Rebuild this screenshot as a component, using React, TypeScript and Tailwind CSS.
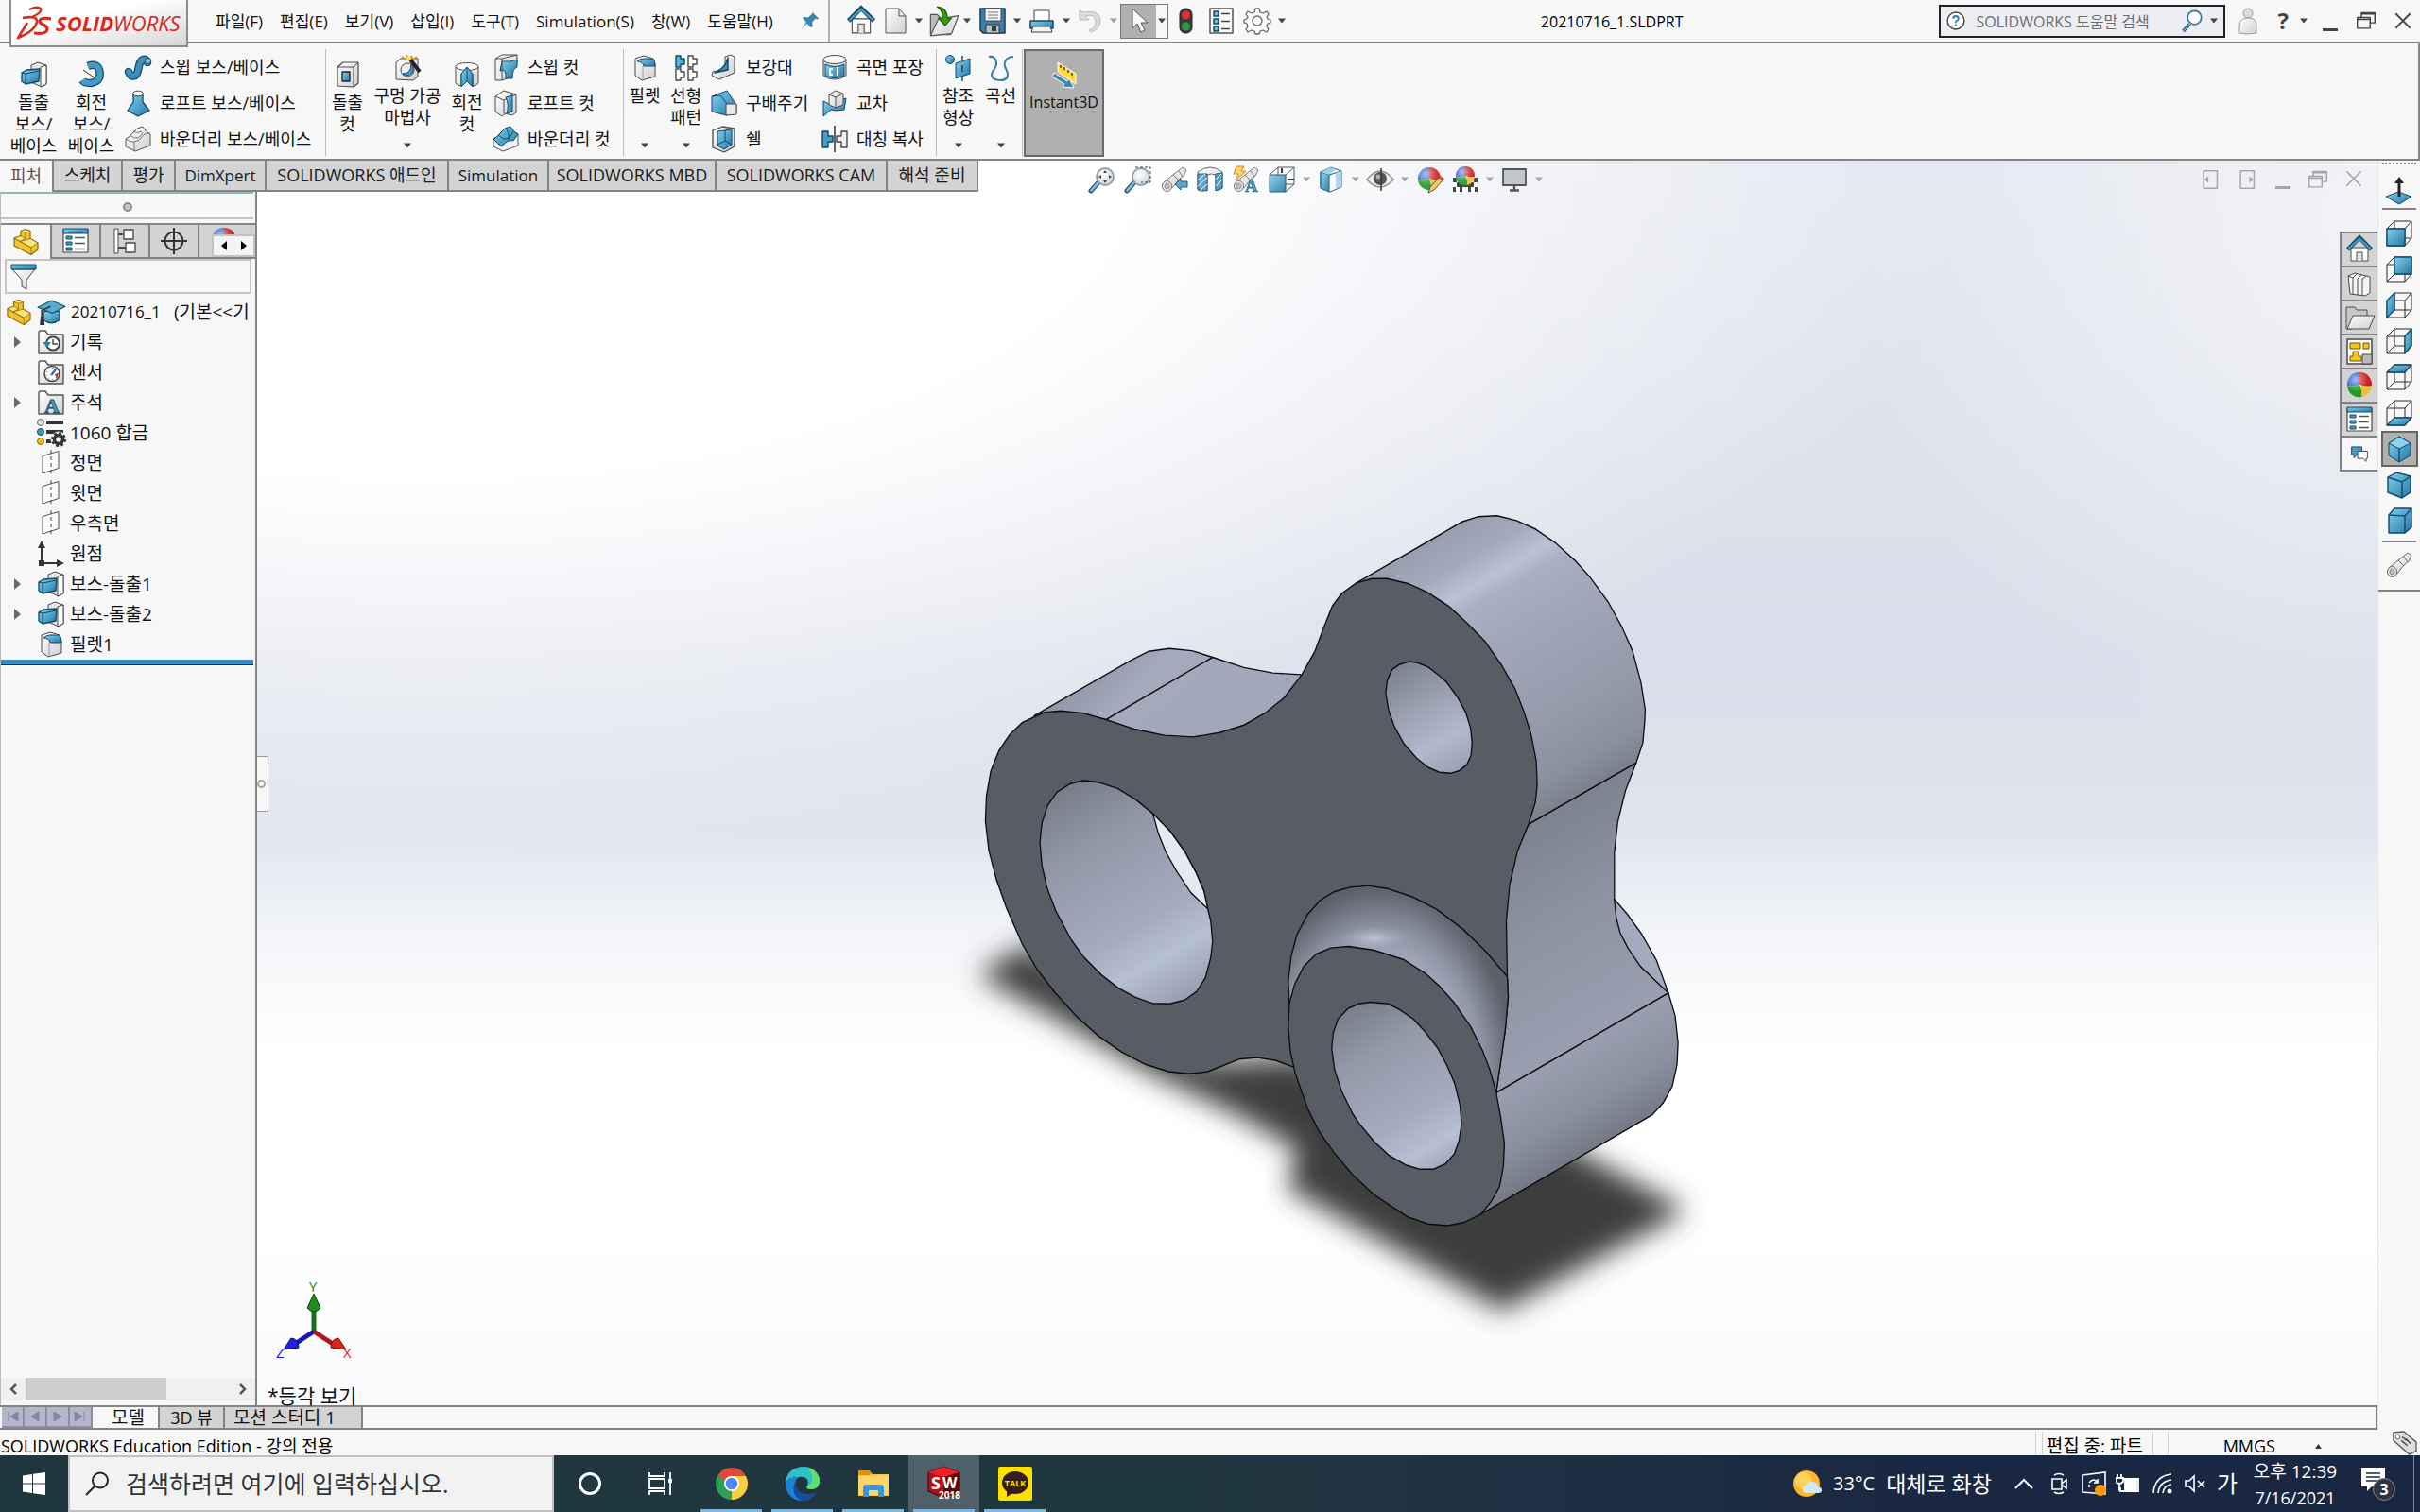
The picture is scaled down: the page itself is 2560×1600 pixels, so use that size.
import type { ReactNode } from 'react';

const B = '#0f4a68';
const G = '#4a4a4a';

function Svg({ children, className = 'size-7' }: { children: ReactNode; className?: string }) {
  return (
    <svg viewBox="0 0 28 28" className={`shrink-0 overflow-visible ${className}`} fill="none" strokeLinejoin="round" aria-hidden="true">
      {children}
    </svg>
  );
}

function Caret({ light = false }: { light?: boolean }) {
  return (
    <svg viewBox="0 0 8 6" className={light ? 'w-2 h-[6px] shrink-0 text-[#a0a0a0]' : 'w-2 h-[6px] shrink-0 text-[#444]'} aria-hidden="true">
      <path d="M0 0.5h8L4 5.5z" fill="currentColor" />
    </svg>
  );
}

function Defs() {
  return (
    <svg className="absolute size-0" aria-hidden="true">
      <defs>
        <linearGradient id="blue" x1="0" y1="0" x2="1" y2="1">
          <stop offset="0" stopColor="#86cfee" />
          <stop offset="0.5" stopColor="#52a5cd" />
          <stop offset="1" stopColor="#2d739b" />
        </linearGradient>
        <linearGradient id="gray" x1="0" y1="0" x2="1" y2="1">
          <stop offset="0" stopColor="#ffffff" />
          <stop offset="1" stopColor="#cfcfcf" />
        </linearGradient>
        <radialGradient id="glass" cx="0.4" cy="0.35" r="0.7">
          <stop offset="0" stopColor="#ffffff" />
          <stop offset="1" stopColor="#c5d2da" />
        </radialGradient>
        <radialGradient id="shine" cx="0.35" cy="0.3" r="0.5">
          <stop offset="0" stopColor="#ffffff" stopOpacity="0.6" />
          <stop offset="1" stopColor="#ffffff" stopOpacity="0" />
        </radialGradient>
      </defs>
    </svg>
  );
}

function Ball({ cx = 14, cy = 13, r = 12 }: { cx?: number; cy?: number; r?: number }) {
  return (
    <g transform={`translate(${cx} ${cy}) scale(${r})`}>
      <path d="M0 0V-1A1 1 0 0 0 -1 0.1Q-0.5 0.2 0 0z" fill="#2458cc" />
      <path d="M0 0V-1A1 1 0 0 1 1 0.1Q0.5 0.2 0 0z" fill="#cf1d1d" />
      <path d="M0 0Q-0.5 0.2 -1 0.1A1 1 0 0 0 0.2 1Q0.2 0.4 0 0z" fill="#1f9a24" />
      <path d="M0 0Q0.5 0.2 1 0.1A1 1 0 0 1 0.2 1Q0.2 0.4 0 0z" fill="#eac03a" />
      <circle r="1" fill="url(#shine)" />
    </g>
  );
}

const houseIcon = (
  <>
    <path d="M5 12h18v14H5z" fill="#fff" stroke={G} />
    <path d="M11 26v-9h6v9" stroke={G} fill="#e4e4e4" />
    <path d="M1.500 14 14 1.500 26.500 14" stroke={B} strokeWidth="4.500" strokeLinejoin="miter" />
    <path d="M2 13.500 14 2.500 26 13.500" stroke="#4a9cc5" strokeWidth="2" strokeLinejoin="miter" />
  </>
);
const partIcon = (
  <>
    <path d="M2 10l7-2.500V2.500l5-2 5 2v8l8 4.500v7l-7 5.500L2 18z" fill="#f4c42c" stroke="#8a6a10" strokeWidth="1.200" />
    <path d="M9 2.500l5-2 5 2-5 2zM2 10l7-2.500 5 3-6 3zM8 13.500l11-3 8 4.500-7 5z" fill="#fbe37c" stroke="#8a6a10" strokeWidth="0.800" />
    <path d="M14 4.500v6M20 20v7.500M2 10l18 10" stroke="#8a6a10" strokeWidth="0.800" />
  </>
);
const bossIcon = (
  <>
    <path d="M11 4l7-3 9 3v20l-5 3-11-5z" fill="#e6e6e6" stroke={G} />
    <path d="M21 6l6-2v20l-6 3z" fill="#fff" stroke={G} />
    <path d="M1 12l5-3 14-1-1 13-14 3-4-3z" fill="url(#blue)" stroke={B} strokeWidth="1.300" />
    <path d="M1 12l4 1 15-3M5 13v10" stroke={B} />
  </>
);
const filletIcon = (
  <>
    <path d="M4 4 13 1l10 3 2 6v13l-14 4-7-5z" fill="url(#gray)" stroke={G} />
    <path d="M6 7q3-3 7-3h9q3 1 3 8H13q-1-5-7-5z" fill="url(#blue)" stroke={B} />
    <path d="M12 12v15" stroke="#999" />
  </>
);
const listIcon = (
  <>
    <path d="M1 2h26v24H1z" fill="#fff" stroke={G} strokeWidth="1.200" />
    <path d="M1 1h26v5H1z" fill="url(#blue)" stroke={B} />
    <path d="M4 9h6v3H4zM4 15h6v3H4zM4 21h6v3H4z" fill="#4a9cc5" stroke={B} />
    <path d="M13 10.500h11M13 16.500h11M13 22.500h11" stroke="#555" strokeWidth="1.300" />
  </>
);
const scopeIcon = (
  <>
    <path d="M2 18 14 8l4-3 5-4 4 3-3 6-5 4-7 9z" fill="url(#gray)" stroke="#6a6a6a" />
    <path d="M13 9l6 6M19 5l4 6" stroke="#6a6a6a" />
    <ellipse cx="6.500" cy="21" rx="5" ry="5.500" fill="#e8e8e8" stroke="#6a6a6a" />
    <ellipse cx="6.500" cy="21" rx="2.500" ry="3" fill="#bbb" stroke="#888" />
  </>
);
const planeIcon = (
  <>
    <path d="M5 6.500 22 1.500v18L5 25z" fill="#fafafa" stroke="#555" />
    <path d="M14 0v28" stroke="#444" strokeDasharray="4 3" />
  </>
);
const folder = <path d="M1 4q0-2 2-2h5l3 4h16v20H1z" fill="url(#gray)" stroke="#555" strokeWidth="1.400" />;

function Magnifier() {
  return (
    <>
      <path d="M10 17 2 26" stroke={B} strokeWidth="5" strokeLinecap="round" />
      <path d="M9.500 17.500 2.500 25.500" stroke="#7cbcdc" strokeWidth="2.500" strokeLinecap="round" />
      <circle cx="17" cy="11" r="9" fill="url(#glass)" stroke="#8a9298" strokeWidth="1.800" />
    </>
  );
}

const menus = ['파일(F)', '편집(E)', '보기(V)', '삽입(I)', '도구(T)', 'Simulation(S)', '창(W)', '도움말(H)'];

function TitleBar() {
  return (
    <header className="relative z-10 flex h-[46px] shrink-0 items-center border-b-2 border-[#848484] bg-[#f7f7f7]">
      <div className="ml-[10px] flex h-[50px] w-[189px] shrink-0 items-center gap-[5px] self-start border-2 border-t-0 border-[#8c8c8c] bg-linear-to-br from-white from-40% to-[#d6d6d6] pl-[6px]">
        <svg viewBox="0 0 36 36" className="size-9 shrink-0 text-[#da291c]" fill="none" stroke="currentColor" aria-hidden="true">
          <path d="M13 4Q22 0 25 3q2 4-9 9" strokeWidth="2.400" />
          <path d="M6 13q16-3 15 4Q19 27 1 34l10-16" strokeWidth="2.600" />
          <path d="M36 14q-11-2-12 2c-1 4 9 4 8 9-1 5-7 5-14 4" strokeWidth="3.200" />
        </svg>
        <span className="whitespace-nowrap text-[22px] italic text-[#da291c]">
          <b>SOLID</b>WORKS
        </span>
      </div>
      <nav className="ml-[29px] flex gap-[18px] pt-[2px] text-[17px]">
        {menus.map((m) => (
          <button key={m} className="whitespace-nowrap">
            {m}
          </button>
        ))}
      </nav>
      <button aria-label="고정" className="ml-[29px] shrink-0">
        <Svg className="size-5">
          <path d="M17 1l10 10-3 1-2-1-5 5 1 6-3 2-6-6-8 9 7-11-5-6 2-2 6 1 6-5z" fill="#3a86ad" />
        </Svg>
      </button>
      <div className="ml-[9px] h-full w-[2px] bg-[#b0b0b0]" />
      <div className="ml-[18px] flex shrink-0 items-center">
        <button aria-label="홈"><Svg className="size-[30px]">{houseIcon}</Svg></button>
        <button aria-label="새 문서" className="ml-2 flex items-center gap-[6px]">
          <Svg><path d="M3 1h14l7 8v18H3z" fill="url(#gray)" stroke="#555" /><path d="M17 1v8h7" stroke="#555" /></Svg>
          <Caret />
        </button>
        <button aria-label="열기" className="ml-[6px] flex items-center gap-1">
          <Svg className="size-[33px]">
            <path d="M2 8h6l3 3h9v15H2z" fill="#bbb" stroke="#555" />
            <path d="M9 12l18-3-6 16-19 2z" fill="url(#gray)" stroke="#555" />
            <path d="M8 1q9 1 9 10h4l-6 7-6-7h4Q13 4 8 1z" fill="#3c9a12" stroke="#1d6204" />
          </Svg>
          <Caret />
        </button>
        <button aria-label="저장" className="ml-[9px] flex items-center gap-2">
          <Svg>
            <path d="M1 1h26v26H4l-3-3z" fill="#3a7fa5" stroke="#173d52" strokeWidth="1.500" />
            <path d="M6 1h17v13H6z" fill="#f5f5f5" stroke="#444" />
            <path d="M9 5h11M9 8h11M9 11h11" stroke="#777" />
            <path d="M7 18h14v9H7z" fill="#b9c4ca" stroke="#333" /><path d="M13 20h5v5h-5z" fill="#333" />
          </Svg>
          <Caret />
        </button>
        <button aria-label="인쇄" className="ml-2 flex items-center gap-2">
          <Svg>
            <path d="M6 3h16v12H6z" fill="#fff" stroke="#444" />
            <path d="M2 14h24v8H2z" fill="url(#blue)" stroke={B} strokeWidth="1.500" />
            <path d="M5 20h18l2 6H3z" fill="#f2f2f2" stroke="#444" />
          </Svg>
          <Caret />
        </button>
        <button aria-label="실행 취소" className="ml-[6px] flex items-center gap-2">
          <Svg><path d="M4 3v10h10l-4-4q10-3 11 5 1 7-7 10l2 2q10-3 10-13Q25 2 9 5z" fill="#ddd" stroke="#b8b8b8" /></Svg>
          <Caret light />
        </button>
        <button aria-label="선택" className="ml-[3px] flex h-[37px] items-center border border-[#777]">
          <span className="flex h-full w-[37px] items-center justify-center bg-[#b0b0b0]">
            <Svg><path d="M8 1v21l5-5 4 9 4-2-4-8h7z" fill="#fafafa" stroke="#555" /></Svg>
          </span>
          <span className="px-[2px]"><Caret /></span>
        </button>
        <button aria-label="재생성" className="ml-1">
          <Svg>
            <rect x="8" y="1" width="13" height="26" rx="6" fill="#3a3a3a" stroke="#222" />
            <circle cx="14.500" cy="8" r="4.500" fill="#d33" /><circle cx="14.500" cy="20" r="4.500" fill="#2e9a3e" />
          </Svg>
        </button>
        <button aria-label="파일 속성" className="ml-[10px]">
          <Svg>
            <path d="M2 1h24v26H2z" fill="#fafafa" stroke="#555" strokeWidth="1.500" />
            <path d="M6 4h5v5H6zM6 12h5v5H6zM6 20h5v5H6z" fill="#6fb6d8" stroke={B} strokeWidth="1.500" />
            <path d="M14 6.500h9M14 14.500h9M14 22.500h9" stroke="#444" strokeWidth="1.500" />
          </Svg>
        </button>
        <button aria-label="옵션" className="ml-[10px] flex items-center gap-2">
          <Svg>
            <path d="M12 1h4l1 4 3 1 4-2 2 3-2 3 1 2 3 1v3l-3 1-1 3 2 3-2 3-4-2-3 1-1 3h-4l-1-3-3-1-4 2-2-3 2-3-1-3-3-1v-3l3-1 1-2-2-3 2-3 4 2 3-1z" fill="#fafafa" stroke="#666" strokeWidth="1.300" />
            <circle cx="14" cy="14" r="5" stroke="#666" strokeWidth="1.300" />
          </Svg>
          <Caret />
        </button>
      </div>
      <h1 className="flex-1 pt-[2px] text-center text-[16px] text-black">20210716_1.SLDPRT</h1>
      <label className="flex h-[35px] w-[303px] shrink-0 items-center gap-2 border-2 border-[#222] bg-[#eceef3] px-[6px]">
        <Svg className="size-[20px]">
          <circle cx="14" cy="14" r="12.500" fill="#fff" stroke="#444" strokeWidth="2" />
          <path d="M10 11q0-4 4-4t4 4q0 2-4 4v2M14 19v3" stroke="#2b7fa8" strokeWidth="2.500" />
        </Svg>
        <input aria-label="도움말 검색" placeholder="SOLIDWORKS 도움말 검색" className="min-w-0 flex-1 bg-transparent pl-1 pt-[2px] text-[16px] outline-none placeholder:text-[#6c6c6c]" />
        <Svg className="size-6">
          <path d="M12 18 4 27" stroke={B} strokeWidth="4" /><path d="M12 18 4 27" stroke="#9ccbe2" strokeWidth="1.500" />
          <circle cx="18" cy="10" r="8.500" fill="#fff" stroke="#3f7698" strokeWidth="2" />
        </Svg>
        <Caret />
      </label>
      <div className="flex shrink-0 items-center pl-[10px] pr-[9px] text-[#444]">
        <button aria-label="로그인">
          <Svg className="h-[30px] w-[28px]">
            <circle cx="14" cy="6" r="5" fill="#ddd" stroke="#999" /><path d="M5 27V19q0-8 9-8t9 8v8q-9 2-18 0z" fill="url(#gray)" stroke="#999" />
          </Svg>
        </button>
        <button className="ml-[18px] flex items-center gap-3 text-[24px] font-bold leading-none">? <Caret /></button>
        <button aria-label="최소화" className="ml-4 pt-[18px]"><span className="block h-[3px] w-4 bg-[#444]" /></button>
        <button aria-label="이전 크기로" className="ml-5"><Svg className="size-5"><path d="M7 8V2h20v15h-6M1 9h19v16H1zM1 12h19M7 4h20" stroke="currentColor" strokeWidth="2" /></Svg></button>
        <button aria-label="닫기" className="ml-5"><Svg className="size-[18px]"><path d="M2 2l24 24M26 2 2 26" stroke="currentColor" strokeWidth="3" /></Svg></button>
      </div>
    </header>
  );
}

function Big({ icon, lines, width, menu = false }: { icon: ReactNode; lines: string[]; width: string; menu?: boolean }) {
  return (
    <button className={`flex h-full shrink-0 flex-col items-center leading-[23px] ${menu ? 'pt-3' : 'pt-[19px]'} ${width}`}>
      <Svg>{icon}</Svg>
      <span className="mt-1 flex flex-col whitespace-nowrap">
        {lines.map((l) => (
          <span key={l}>{l}</span>
        ))}
      </span>
      {menu && <span className="mt-auto flex pb-[11px]"><Caret /></span>}
    </button>
  );
}

function SmallColumn({ items, width }: { items: [string, ReactNode][]; width: string }) {
  return (
    <div className={`shrink-0 pl-[5px] pt-[6px] ${width}`}>
      {items.map(([label, icon]) => (
        <button key={label} className="flex h-[38px] items-center gap-[9px] whitespace-nowrap">
          <Svg>{icon}</Svg>
          {label}
        </button>
      ))}
    </div>
  );
}

function Divider() {
  return <div className="mt-[6px] h-[113px] w-px shrink-0 bg-[#bdbdbd]" />;
}

const icons = {
  revolve: (
    <>
      <path d="M10 5q11-4 12.500 6T13 23q-7 0-9-3" stroke={B} strokeWidth="8.500" />
      <path d="M10 5q11-4 12.500 6T13 23q-7 0-9-3" stroke="#459bc4" strokeWidth="6" />
      <path d="M5 9l13 9" stroke="#333" />
    </>
  ),
  sweep: (
    <>
      <path d="M4 19q2 6 7 4c5-3 2-14 8-17q4-1 5 3" stroke={B} strokeWidth="8.500" strokeLinecap="round" />
      <path d="M4 19q2 6 7 4c5-3 2-14 8-17q4-1 5 3" stroke="#3f8fb8" strokeWidth="6" strokeLinecap="round" />
      <circle cx="24.500" cy="7.500" r="3" fill="#8cc9e6" stroke={B} />
    </>
  ),
  loft: (
    <>
      <path d="M9 4v9L3 22l11 6 12-6-7-9V4z" fill="url(#blue)" stroke={B} strokeWidth="1.300" />
      <ellipse cx="14" cy="4" rx="5.500" ry="2.800" fill="#fff" stroke={G} />
    </>
  ),
  boundary: (
    <>
      <path d="M1 14q5-2 8-7t10-6q3 6 8 8v12L11 27 1 22z" fill="url(#gray)" stroke="#555" />
      <path d="M1 14q5 4 9 3 6-1 8-5t9-4M5 10q5 4 9 3 4-3 5-6M9 6q4 3 9 0M10 17v10" stroke="#777" />
    </>
  ),
  boundaryCut: (
    <>
      <path d="M1 14q5-2 8-7t10-6q3 6 8 8v12L11 27 1 22z" fill="#f2f2f2" stroke="#555" />
      <path d="M1 14q5-2 8-7t10-6q3 6 8 8l-5 7q-6-2-12 6-4-2-9-8z" fill="url(#blue)" stroke={B} />
      <path d="M6 10q5 5 9 4t7-8M14 3q4 3 3 12" stroke={B} />
    </>
  ),
  cut: (
    <>
      <path d="M3 6 9 1h16v22l-5 4L3 26z" fill="url(#gray)" stroke={G} strokeWidth="1.200" />
      <path d="M3 6h17v21" stroke={G} /><path d="M20 6l5-5" stroke={G} />
      <path d="M8 11h8v10H8z" fill="url(#blue)" stroke="#222" strokeWidth="1.300" />
    </>
  ),
  wizard: (
    <>
      <path d="M2 8 7 4h18v19l-5 4L2 26z" fill="url(#gray)" stroke={G} />
      <circle cx="14" cy="16" r="7" fill="#eee" stroke={G} />
      <path d="M9 20q9 0 9-10 4 4 1 9-5 5-10 1z" fill="#4a9cc5" stroke={B} />
      <path d="M17 5 27 18" stroke="#222" strokeWidth="4" />
      <path d="M8 2l3 2M13 0l1 3M19 1l-2 3M24 2l-4 3" stroke="#e8842a" strokeWidth="2" />
      <circle cx="15.500" cy="4" r="2.500" fill="#ffe04a" />
    </>
  ),
  revolveCut: (
    <>
      <path d="M2 6v17q3 3 6 3V13l6-6 6 6v13q4 0 6-3V6z" fill="url(#gray)" stroke={G} />
      <ellipse cx="14" cy="5.500" rx="12" ry="4" fill="#fff" stroke={G} />
      <path d="M8 27V13l6-7 6 7v14l-6-6z" fill="url(#blue)" stroke={B} />
      <path d="M14 6v15" stroke={B} />
    </>
  ),
  sweepCut: (
    <>
      <path d="M3 5 10 1h16v8q-7 3-8 16l-8 3H3z" fill="url(#gray)" stroke={G} />
      <path d="M10 8q9 1 16-2v8q-5 1-5 12h-7q1-11-6-8z" fill="url(#blue)" stroke={B} />
      <path d="M3 5h7v23M10 5l16-4" stroke={G} />
    </>
  ),
  loftCut: (
    <>
      <path d="M3 7 12 1l13 4v19l-4 3-8-2-3 3-7-5z" fill="url(#gray)" stroke={G} />
      <path d="M3 7l9 4 13-6M12 11v14" stroke={G} />
      <path d="M14 8q6-1 7-3v18l-6 2q3-9-1-17z" fill="url(#blue)" stroke={B} />
    </>
  ),
  pattern: (
    <>
      <path d="M3 1h5v3h4v6H8v3H3z" fill="#5fb0d6" stroke={B} strokeWidth="1.400" />
      <path d="M16 1h5v3h4v6h-4v3h-5zM3 15h5v3h4v6H8v3H3zM16 15h5v3h4v6h-4v3h-5z" fill="#fff" stroke={G} strokeWidth="1.400" />
    </>
  ),
  rib: (
    <>
      <path d="M15 3l6-2 4 2v17L9 27l-8-4 1-4 13-4z" fill="url(#gray)" stroke={G} />
      <path d="M18 4q-2 11-14 16l14-3z" fill="url(#blue)" stroke={B} strokeWidth="1.400" />
    </>
  ),
  draft: (
    <>
      <path d="M1 7 17 1l10 15v9l-11 2L1 23z" fill="url(#blue)" stroke={B} />
      <path d="M16 15h11v11l-11 1z" fill="#e8e8e8" stroke={G} />
      <path d="M1 7l9-1 7 9" stroke={B} />
    </>
  ),
  shell: (
    <>
      <path d="M2 5 12 1l13 2v19l-11 6-12-5z" fill="url(#gray)" stroke={G} strokeWidth="1.300" />
      <path d="M7 6l15-2v16l-8 5-7-4z" fill="url(#blue)" stroke={B} /><path d="M7 20l8-4 7 4M15 16V5" stroke={B} />
    </>
  ),
  wrap: (
    <>
      <path d="M2 6v17q5 4 12 4t12-4V6z" fill="#e0e0e0" stroke={G} />
      <path d="M4 11q10 5 20 0v12q-10 5-20 0z" fill="url(#blue)" stroke={B} />
      <path d="M12 16H9v6h3M17 14v9" stroke="#fff" strokeWidth="2" />
      <ellipse cx="14" cy="6" rx="12" ry="4.500" fill="#fafafa" stroke={G} />
    </>
  ),
  intersect: (
    <>
      <path d="M2 12l6 3 18-6-2 12-8 1-6-1-8 7z" fill="url(#blue)" stroke={B} />
      <path d="M8 5l7-4 8 3v12l-8 3-7-3z" fill="url(#gray)" stroke={G} /><path d="M8 5l7 3 8-4M15 8v11" stroke={G} />
    </>
  ),
  mirror: (
    <>
      <path d="M1 6h6v5h5v6H7v6H1z" fill="#4a9cc5" stroke={B} strokeWidth="1.400" />
      <path d="M27 6h-6v5h-5v6h5v6h6z" fill="#f0f0f0" stroke={G} strokeWidth="1.400" />
      <path d="M14 0v28" stroke="#222" strokeWidth="1.400" />
    </>
  ),
  reference: (
    <>
      <circle cx="5" cy="5" r="4.500" fill="url(#blue)" stroke={B} />
      <path d="M11 9l15-5v16l-15 5z" fill="url(#blue)" stroke={B} /><path d="M18 1v5M18 11v7M18 23v5" stroke="#333" strokeWidth="1.400" />
    </>
  ),
  curve: <path d="M1 2q7-1 8 6c1 6-6 10-5 14 1 6 16 7 17 0 1-5-5-9-3-14q2-6 9-6" stroke="#2f7ca6" strokeWidth="2" />,
  instant: (
    <>
      <path d="M7 1l19 12v11L7 11z" fill="#ffd83a" stroke="#fff" />
      <path d="M10 4v3M14 6v3M18 9v3M22 12v3" stroke="#444" strokeWidth="1.500" />
      <path d="M3 12l14 9 2-3 5 10-12-1 2-3L1 16z" fill="#3c86b0" stroke="#fff" />
    </>
  ),
};

function Ribbon() {
  return (
    <section className="flex h-[124px] shrink-0 border-b-2 border-r-2 border-[#848484] bg-[#f7f7f7] pl-[5px]">
      <Big icon={bossIcon} lines={['돌출', '보스/', '베이스']} width="w-[61px]" />
      <Big icon={icons.revolve} lines={['회전', '보스/', '베이스']} width="w-[61px]" />
      <SmallColumn width="w-[217px]" items={[['스윕 보스/베이스', icons.sweep], ['로프트 보스/베이스', icons.loft], ['바운더리 보스/베이스', icons.boundary]]} />
      <Divider />
      <Big icon={icons.cut} lines={['돌출', '컷']} width="w-[45px]" />
      <Big icon={icons.wizard} lines={['구멍 가공', '마법사']} width="w-[82px]" menu />
      <Big icon={icons.revolveCut} lines={['회전', '컷']} width="w-[44px]" />
      <SmallColumn width="w-[143px]" items={[['스윕 컷', icons.sweepCut], ['로프트 컷', icons.loftCut], ['바운더리 컷', icons.boundaryCut]]} />
      <Divider />
      <Big icon={filletIcon} lines={['필렛']} width="w-[44px]" menu />
      <Big icon={icons.pattern} lines={['선형', '패턴']} width="w-[43px]" menu />
      <SmallColumn width="w-[117px]" items={[['보강대', icons.rib], ['구배주기', icons.draft], ['쉘', icons.shell]]} />
      <SmallColumn width="w-[126px]" items={[['곡면 포장', icons.wrap], ['교차', icons.intersect], ['대칭 복사', icons.mirror]]} />
      <Divider />
      <Big icon={icons.reference} lines={['참조', '형상']} width="w-[45px]" menu />
      <Big icon={icons.curve} lines={['곡선']} width="w-[45px]" menu />
      <Divider />
      <button className="ml-px mt-[6px] flex h-[114px] w-[85px] shrink-0 flex-col items-center border-2 border-[#6a6a6a] bg-[#b0b0b0] pt-[11px] text-[16px] leading-[23px]">
        <Svg>{icons.instant}</Svg>
        <span className="mt-1">Instant3D</span>
      </button>
    </section>
  );
}

const tabs: [string, string][] = [
  ['스케치', 'w-[73px]'],
  ['평가', 'w-[56px]'],
  ['DimXpert', 'w-[96px] text-[17px]'],
  ['SOLIDWORKS 애드인', 'w-[193px]'],
  ['Simulation', 'w-[106px] text-[17px]'],
  ['SOLIDWORKS MBD', 'w-[177px]'],
  ['SOLIDWORKS CAM', 'w-[181px]'],
  ['해석 준비', 'w-[98px]'],
];

function ViewButton({ label, children, menu = false }: { label: string; children: ReactNode; menu?: boolean }) {
  return (
    <button aria-label={label} className={`flex items-center gap-[8px] opacity-90 ${menu ? '-mr-[2px]' : ''}`}>
      <Svg>{children}</Svg>
      {menu && <Caret light />}
    </button>
  );
}

function TabRow() {
  return (
    <div className="relative z-10 flex h-[33px] shrink-0">
      <div role="tablist" className="flex shrink-0 border-b-2 border-[#848484] text-[#1a1a1a]">
        <button role="tab" aria-selected="true" className="-mb-[2px] w-[55px] bg-[#f7f7f7] text-[#555]">피처</button>
        {tabs.map(([label, width]) => (
          <button key={label} role="tab" aria-selected="false" className={`whitespace-nowrap border-l-2 border-[#848484] bg-[#d3d3d3] last:border-r-2 ${width}`}>
            {label}
          </button>
        ))}
      </div>
      <div className="ml-[117px] flex shrink-0 items-start gap-[10px] pt-[6px]">
        <ViewButton label="전체 보기"><Magnifier /><path d="M17 4l2 3h-4zM17 18l2-3h-4zM10 11l3-2v4zM24 11l-3-2v4z" fill="#333" /></ViewButton>
        <ViewButton label="영역 확대"><Magnifier /><path d="M11 1h16v16H17" stroke="#333" strokeDasharray="3 2" /></ViewButton>
        <ViewButton label="이전 뷰">{scopeIcon}<path d="M15 19l6-6v3h7v6h-7v3z" fill="#4a9cc5" stroke={B} /></ViewButton>
        <ViewButton label="단면도">
          <path d="M1 6q13-10 26 0v17q-3 3-7 2V9q-5-2-9 0v16q-6 3-10 0z" fill="url(#gray)" stroke="#555" />
          <path d="M1 8h10v18L1 24zM20 8l7-1v16l-7 3z" fill="#4a9cc5" stroke={B} />
          <path d="M1 15l8-7M1 21l10-9M4 25l7-6M20 14l6-6M20 21l7-7" stroke="#fff" />
        </ViewButton>
        <ViewButton label="동적 주석 뷰">{scopeIcon}<path d="M4 0h8l-3 5h5L3 15l3-7H1z" fill="#ffd34a" stroke="#d0702a" /><text x="13" y="27" fontSize="19" fontWeight="700" fontFamily="Liberation Serif" fill="#3b8fb8" stroke={B} strokeWidth="0.600">A</text></ViewButton>
        <ViewButton label="뷰 방향" menu><path d="M1 9 10 1h17v18l-9 8M18 9l9-8M10 1v8M27 19h-9" stroke="#444" /><path d="M1 9h17v18H1z" fill="url(#blue)" stroke={B} /><path d="M14 2v5M27 14h-7" stroke="#222" strokeWidth="2" /></ViewButton>
        <ViewButton label="표시 유형" menu><path d="M3 6 14 1l11 4v17l-12 5L3 23z" fill="#fafafa" stroke={B} /><path d="M3 6l9 3v18l-9-4z" fill="url(#blue)" stroke={B} /><path d="M3 6 14 1l5 2-7 6z" fill="#8fd0ec" /><path d="M12 9l13-4" stroke={B} /><path d="M19 7l6-2v17l-6 2z" fill="#a8d4ea" /></ViewButton>
        <ViewButton label="숨기기/보이기" menu><path d="M0 14Q14-4 28 14 14 30 0 14z" fill="#eee" stroke="#888" strokeWidth="1.500" /><circle cx="14" cy="13" r="7" fill="#444" /><circle cx="12" cy="11" r="2.500" fill="#aaa" /><path d="M15 2v24" stroke="#222" strokeWidth="1.500" /></ViewButton>
        <ViewButton label="화면 편집"><Ball /><path d="M13 28l2-6 9-10 4 3-9 10z" fill="#f2c94a" stroke="#444" /><path d="M24 12l2-2 4 3-2 3z" fill="#c44" /></ViewButton>
        <ViewButton label="화면 적용" menu><path d="M1 12h26v15H1z" fill="#333" /><path d="M5 12h5v5H5zM18 12h5v5h-5zM1 17h4v5H1zM11 22h6v5h-6zM23 17h4v5h-4zM4 22h4v5H4zM20 22h4v5h-4z" fill="#fff" /><Ball cx={14} cy={10} r={10} /></ViewButton>
        <ViewButton label="뷰 설정" menu><path d="M2 3h24v17H2z" fill="#bfc3c6" stroke="#444" strokeWidth="1.800" /><path d="M14 20v5M9 25.500h10" stroke="#444" strokeWidth="2.500" /></ViewButton>
      </div>
      <div className="ml-auto flex items-start gap-[19px] pr-4 pt-[10px] text-[#a5a5a5]">
        <button aria-label="이전 창"><Svg className="size-5"><path d="M3 1h20v26H3z" stroke="currentColor" strokeWidth="2" /><path d="M10 9v10l-6-5z" fill="currentColor" /></Svg></button>
        <button aria-label="다음 창"><Svg className="size-5"><path d="M3 1h20v26H3z" stroke="currentColor" strokeWidth="2" /><path d="M16 9v10l6-5z" fill="currentColor" /></Svg></button>
        <button aria-label="문서 최소화" className="pt-[17px]"><span className="block h-[3px] w-4 bg-[#a5a5a5]" /></button>
        <button aria-label="문서 크기 복원"><Svg className="size-5"><path d="M7 8V2h20v15h-6M1 9h19v16H1zM1 12h19M7 4h20" stroke="currentColor" strokeWidth="2" /></Svg></button>
        <button aria-label="문서 닫기"><Svg className="size-[18px]"><path d="M2 2l24 24M26 2 2 26" stroke="currentColor" strokeWidth="2.500" /></Svg></button>
      </div>
    </div>
  );
}

const tree: { label: string; open?: boolean; icon: ReactNode }[] = [
  { label: '기록', open: true, icon: <>{folder}<circle cx="16" cy="15.500" r="7" fill="#fff" stroke="#444" strokeWidth="2" /><path d="M16 11v5h5" stroke="#444" strokeWidth="1.500" /><path d="M5 14h9l-4 6z" fill="#2f7ca6" /></> },
  { label: '센서', icon: <>{folder}<circle cx="15" cy="15.500" r="8" fill="#fff" stroke="#444" strokeWidth="1.500" /><path d="M14 17l5-6" stroke="#2f7ca6" strokeWidth="2.500" /><path d="M22 15l-4 1 2 5z" fill="#d22" /><circle cx="15" cy="15.500" r="6" stroke="#444" strokeDasharray="1 3" /></> },
  { label: '주석', open: true, icon: <>{folder}<text x="7" y="25" fontSize="22" fontWeight="700" fontFamily="Liberation Serif" fill="#4a9cc5" stroke={B} strokeWidth="0.800">A</text></> },
  { label: '1060 합금', icon: <><circle cx="3" cy="3" r="3.500" fill="#ddd" stroke="#666" /><circle cx="3" cy="13" r="3.500" fill="#3f93bd" stroke={B} /><circle cx="3" cy="23" r="3.500" fill="#f0be1e" stroke="#8a6a10" /><path d="M9 3h18M9 13h18M9 23h6" stroke="#333" strokeWidth="4" /><circle cx="22" cy="21" r="8" stroke="#f7f7f7" fill="#f7f7f7" /><circle cx="22" cy="21" r="4.500" stroke="#333" strokeWidth="3.500" /><circle cx="22" cy="21" r="7" stroke="#333" strokeWidth="2" strokeDasharray="3 2.500" /></> },
  { label: '정면', icon: planeIcon },
  { label: '윗면', icon: planeIcon },
  { label: '우측면', icon: planeIcon },
  { label: '원점', icon: <><path d="M4 24V6M4 24h18" stroke="#333" strokeWidth="2" /><path d="M4 0l4 8H0zM28 24l-8 4v-8zM1 21h6v6H1z" fill="#333" /></> },
  { label: '보스-돌출1', open: true, icon: bossIcon },
  { label: '보스-돌출2', open: true, icon: bossIcon },
  { label: '필렛1', icon: filletIcon },
];

function FeaturePanel() {
  return (
    <aside className="flex w-[272px] shrink-0 flex-col border-l border-r-2 border-l-[#bbb] border-r-[#848484] bg-[#f7f7f7]">
      <div className="mr-[2px] flex h-[29px] shrink-0 items-center justify-center border-b-2 border-t-2 border-b-[#c4c4c4] border-t-[#8fb5b0]">
        <span className="mt-[2px] size-[10px] rounded-full border-2 border-[#8d8d8d] bg-[#c8c8c8]" />
      </div>
      <div className="mt-1 flex h-[38px] shrink-0 border-t-2 border-[#848484]">
        <button aria-label="트리" className="flex w-[52px] items-center justify-center"><Svg>{partIcon}</Svg></button>
        <button aria-label="속성" className="flex w-[52px] items-center justify-center border-b-2 border-l-2 border-[#848484] bg-[#d3d3d3]"><Svg>{listIcon}</Svg></button>
        <button aria-label="설정" className="flex w-[52px] items-center justify-center border-b-2 border-l-2 border-[#848484] bg-[#d3d3d3]">
          <Svg><path d="M3 1h4v26H3z" fill="#fff" stroke={G} /><path d="M7 7h5M7 21h8" stroke={G} strokeWidth="2" /><path d="M13 2h10v10H13zM15 16h10v10H15z" fill="#fff" stroke={G} strokeWidth="1.400" /></Svg>
        </button>
        <button aria-label="치수" className="flex w-[52px] items-center justify-center border-b-2 border-l-2 border-[#848484] bg-[#d3d3d3]">
          <Svg><circle cx="14" cy="14" r="9.500" stroke="#333" strokeWidth="2" /><path d="M14 0v28M0 14h28" stroke="#333" strokeWidth="2" /></Svg>
        </button>
        <button aria-label="표시" className="relative flex flex-1 overflow-hidden border-b-2 border-l-2 border-[#848484] bg-[#d3d3d3] pl-3 pt-[2px]">
          <Svg><Ball cy={14} cx={14} r={13} /></Svg>
          <span className="absolute bottom-0 right-0 flex h-6 w-[46px] items-center justify-around border-2 border-[#c2c2c2] bg-[#f4f4f4] text-black">
            <svg viewBox="0 0 6 10" className="h-[10px] w-[6px]"><path d="M6 0v10L0 5z" /></svg>
            <svg viewBox="0 0 6 10" className="h-[10px] w-[6px]"><path d="M0 0v10l6-5z" /></svg>
          </span>
        </button>
      </div>
      <label className="ml-1 mr-[4px] flex h-[37px] shrink-0 items-center border-2 border-[#c4c4c4] pl-1">
        <Svg>
          <path d="M2 6h24L17 17v10l-5-3v-7z" fill="url(#gray)" stroke={G} /><path d="M1 1h26v5H1z" fill="url(#blue)" stroke={B} />
        </Svg>
        <input aria-label="필터" className="min-w-0 flex-1 bg-transparent outline-none" />
      </label>
      <div className="mr-[2px] pt-[3px] text-[19px]">
        <div className="flex h-8 items-center whitespace-nowrap pl-[5px]">
          <Svg className="size-[27px]">{partIcon}</Svg>
          <Svg className="ml-[7px] size-[29px]">
            <path d="M6 13v9q8 6 16 0v-9z" fill="url(#blue)" stroke={B} /><path d="M0 9 14 2l14 6-13 7z" fill="#5aabd0" stroke={B} />
            <path d="M13 8 4 12v8" stroke="#333" strokeWidth="1.500" /><path d="M3 18h3l1 9H2z" fill="#333" />
          </Svg>
          <span className="ml-[6px] text-[17px]">20210716_1</span>
          <span className="ml-[14px]">(기본&lt;&lt;기</span>
        </div>
        <ul>
          {tree.map((n) => (
            <li key={n.label} className="flex h-8 items-center pl-[14px]">
              <span className="w-[25px]">{n.open && <svg viewBox="0 0 7 12" className="h-3 w-[7px]" fill="#6a6a6a"><path d="M0 0v12l7-6z" /></svg>}</span>
              <Svg>{n.icon}</Svg>
              <span className="ml-[6px]">{n.label}</span>
            </li>
          ))}
        </ul>
        <div className="h-[6px] border-b border-[#1a1aa0] bg-[#338fc6]" />
      </div>
      <div className="mb-[5px] mt-auto flex h-6 items-center bg-[#f0f0f0] text-[#555]">
        <button aria-label="왼쪽으로" className="flex w-[26px] justify-center"><svg viewBox="0 0 8 12" className="h-3 w-2" fill="none" stroke="currentColor" strokeWidth="2.500"><path d="M7 1 2 6l5 5" /></svg></button>
        <div className="h-full w-[149px] bg-[#cdcdcd]" />
        <button aria-label="오른쪽으로" className="ml-auto flex w-[26px] justify-center"><svg viewBox="0 0 8 12" className="h-3 w-2" fill="none" stroke="currentColor" strokeWidth="2.500"><path d="M1 1l5 5-5 5" /></svg></button>
      </div>
    </aside>
  );
}

const face =
  'M200,403 L165,406 L121,424 L95,446 L72,476 L55,514 L46,560 L44,606 L51,660 L66,712 L87,765 L120,832 L150,878 L188,922 L233,966 L278,1002 L327,1032 L377,1055 L424,1068 L467,1072 L505,1068 L570,1045 L608,1042 L645,1047 L684,1060 L900,1200 L1103,1107 L1122,990 L1128,930 L1126,893 L1124,790 L1131,723 L1147,662 L1170,612 L1184,572 L1188,540 L1186,495 L1175,445 L1160,403 L1142,362 L1113,317 L1080,275 L1045,243 L1005,210 L960,184 L920,168 L877,159 L845,159 L813,167 L783,186 L763,210 L745,250 L727,293 L700,336 L663,379 L625,406 L580,429 L530,443 L475,451 L415,448 L355,437 L294,419 L247,407 Z';
const ring =
  'M797,837 L760,840 L730,851 L704,874 L685,907 L674,943 L672,988 L676,1030 L686,1070 L712,1136 L735,1177 L765,1215 L805,1258 L850,1295 L880,1313 L920,1336 L962,1349 L1002,1352 L1037,1346 L1071,1331 L1093,1307 L1110,1280 L1118,1242 L1120,1200 L1112,1150 L1103,1107 L1090,1065 L1075,1030 L1050,985 L1015,940 L985,910 L955,886 L910,861 L850,844 Z';
const ringHole =
  'M842,940 L818,943 L795,952 L775,971 L765,997 L762,1025 L768,1065 L783,1105 L805,1145 L820,1165 L850,1197 L880,1222 L915,1240 L945,1248 L972,1248 L998,1238 L1016,1220 L1026,1195 L1031,1165 L1028,1130 L1017,1090 L1000,1055 L982,1025 L955,994 L930,970 L905,955 L880,943 Z';
const bigHole =
  'M247,531 L218,538 L192,553 L173,577 L161,610 L157,645 L161,687 L172,730 L190,772 L222,825 L248,857 L285,890 L320,914 L355,931 L390,942 L425,943 L457,936 L482,920 L500,895 L511,858 L515,828 L511,790 L505,768 L497,735 L480,700 L457,662 L427,625 L391,592 L355,566 L318,546 L280,535 Z';
const smallHole =
  'M922,312 L903,317 L887,327 L877,347 L874,370 L880,402 L892,432 L912,464 L938,490 L962,507 L985,516 L1008,518 L1027,513 L1042,502 L1051,485 L1053,462 L1050,435 L1040,406 L1023,378 L1000,350 L985,338 L962,322 L940,314 Z';

function Model() {
  return (
    <svg viewBox="0 0 1568 1568" preserveAspectRatio="none" className="absolute left-[748px] top-[318px] h-[900px] w-[800px] overflow-visible" role="img" aria-label="20210716_1">
      <defs>
        <filter id="soft" x="-20%" y="-20%" width="140%" height="140%"><feGaussianBlur stdDeviation="26" /></filter>
        <linearGradient id="lobe" gradientUnits="userSpaceOnUse" x1="813" y1="167" x2="1068" y2="664">
          <stop offset="0" stopColor="#989eae" /><stop offset="0.120" stopColor="#a3aabc" /><stop offset="0.210" stopColor="#b9c2d5" /><stop offset="0.270" stopColor="#a9afc4" />
          <stop offset="0.420" stopColor="#a1a7b8" /><stop offset="0.720" stopColor="#959bab" /><stop offset="0.900" stopColor="#8a909e" /><stop offset="1" stopColor="#7b808c" />
        </linearGradient>
        <linearGradient id="waist" gradientUnits="userSpaceOnUse" x1="1170" y1="580" x2="1370" y2="969">
          <stop offset="0" stopColor="#7b808d" /><stop offset="0.500" stopColor="#8d93a2" /><stop offset="1" stopColor="#999fb0" />
        </linearGradient>
        <linearGradient id="base" gradientUnits="userSpaceOnUse" x1="1103" y1="1107" x2="1200" y2="1296">
          <stop offset="0" stopColor="#999fb0" /><stop offset="0.500" stopColor="#8a909e" /><stop offset="0.850" stopColor="#757a86" /><stop offset="1" stopColor="#666a74" />
        </linearGradient>
        <linearGradient id="left" gradientUnits="userSpaceOnUse" x1="150" y1="410" x2="280" y2="560">
          <stop offset="0" stopColor="#8f95a5" /><stop offset="0.500" stopColor="#a5abbd" /><stop offset="1" stopColor="#a2a8ba" />
        </linearGradient>
        <linearGradient id="boreA" gradientUnits="userSpaceOnUse" x1="247" y1="531" x2="451" y2="928">
          <stop offset="0" stopColor="#797e8a" /><stop offset="0.250" stopColor="#9197a6" /><stop offset="0.650" stopColor="#a5abbe" /><stop offset="0.820" stopColor="#b6c0d3" /><stop offset="1" stopColor="#9aa1b2" />
        </linearGradient>
        <linearGradient id="boreB" gradientUnits="userSpaceOnUse" x1="922" y1="312" x2="1025" y2="512">
          <stop offset="0" stopColor="#7d828f" /><stop offset="0.350" stopColor="#999fae" /><stop offset="0.720" stopColor="#b2b9cd" /><stop offset="1" stopColor="#9aa1b2" />
        </linearGradient>
        <linearGradient id="boreC" gradientUnits="userSpaceOnUse" x1="842" y1="940" x2="1000" y2="1248">
          <stop offset="0" stopColor="#7b808c" /><stop offset="0.250" stopColor="#9399a8" /><stop offset="0.650" stopColor="#a5abbe" /><stop offset="0.850" stopColor="#b6c0d3" /><stop offset="1" stopColor="#9da4b5" />
        </linearGradient>
        <radialGradient id="fillet" gradientUnits="userSpaceOnUse" cx="860" cy="1080" r="400" gradientTransform="matrix(0.800 0 0 1 172 0)">
          <stop offset="0.550" stopColor="#a4aabd" /><stop offset="0.680" stopColor="#8f95a4" /><stop offset="0.880" stopColor="#5c606a" />
        </radialGradient>
        <radialGradient id="glint">
          <stop offset="0" stopColor="#c8cfe0" stopOpacity="0.800" /><stop offset="1" stopColor="#a4aabd" stopOpacity="0" />
        </radialGradient>
      </defs>
      <path d="M25,888 L130,835 L500,1050 L690,1040 L1200,1180 L1500,1324 L1115,1508 L665,1280 L695,1215 L570,1150 L385,1070 L190,970 Z" fill="#3c3c3c" filter="url(#soft)" />
      <g stroke="#0b0b0d" strokeWidth="2.500" strokeLinejoin="round">
        <path d="M1348,750 L1375,778 L1405,815 L1435,862 L1460,923 L1370,860 L1340,790 Z" fill="#a3aabd" />
        <path d="M145,412 L345,310 L383,293 L425,288 L472,292 L515,304 L580,323 L640,333 L698,336 L700,470 L300,470 Z" fill="url(#left)" />
        <path d="M294,419 L515,304" fill="none" />
        <path d="M813,167 L1033,54 L1065,45 L1105,43 L1145,52 L1185,68 L1227,94 L1268,127 L1298,157 L1335,202 L1363,247 L1386,293 L1403,350 L1412,400 L1411,423 L1407,462 L1393,499 L1170,612 L1000,500 Z" fill="url(#lobe)" />
        <path d="M1170,612 L1393,499 L1371,550 L1355,608 L1348,665 L1348,750 L1352,785 L1360,812 L1376,840 L1402,874 L1460,923 L1103,1107 L1080,800 Z" fill="url(#waist)" />
        <path d="M1103,1107 L1460,923 L1474,965 L1480,1015 L1478,1055 L1468,1095 L1449,1126 L1426,1148 L1071,1331 L1050,1200 Z" fill="url(#base)" />
        <path d={face} fill="#585c65" />
        <path d={bigHole} fill="url(#boreA)" />
        <path d="M391,592 L403,630 L418,663 L440,698 L470,738 L505,768 L497,735 L480,700 L457,662 L427,625 Z" fill="#e6e9f1" />
        <path d={smallHole} fill="url(#boreB)" />
        <path d="M674,943 L672,900 L678,855 L690,815 L712,778 L738,752 L768,736 L800,728 L838,725 L880,731 L930,746 L980,769 L1035,806 L1080,845 L1126,893 L1128,930 L1122,990 L1103,1107 L1000,1200 L800,1100 Z" fill="url(#fillet)" />
        <ellipse cx="850" cy="822" rx="75" ry="22" fill="url(#glint)" stroke="none" />
        <path d={ring} fill="#585c65" />
        <path d={ringHole} fill="url(#boreC)" />
      </g>
    </svg>
  );
}

function Triad() {
  return (
    <svg viewBox="0 -8 86 100" className="absolute bottom-[42px] left-[18px] h-[100px] w-[86px]" fontFamily="Open Sans" fontSize="15" aria-hidden="true">
      <path d="M42 56V31" stroke="#1d6b1d" strokeWidth="5" /><path d="M42 16l7 15q-7 8-14 0z" fill="#1f8a1f" stroke="#0c4a0c" />
      <path d="M42 56l-20 13" stroke="#1818b0" strokeWidth="5" /><path d="M10 75l8-12q8 1 8 10z" fill="#2222dd" stroke="#0a0a70" />
      <path d="M42 56l20 13" stroke="#b01818" strokeWidth="5" /><path d="M76 75l-8-12q-8 1-8 10z" fill="#dd2222" stroke="#700a0a" />
      <text x="37" y="14" fill="#1f8a1f">Y</text><text x="2" y="84" fill="#1414ff">Z</text><text x="73" y="84" fill="#f01414">X</text>
    </svg>
  );
}

const paneItems: [string, ReactNode][] = [
  ['리소스', houseIcon],
  ['라이브러리', <path d="M2 6l7-3 16 4v17l-5 3L4 25zM2 6l5 2v18M7 8l4-4M12 9v17M12 9l4-4M17 9v17M17 9l4-3" fill="#f5f5f5" stroke={G} />],
  ['탐색기', <><path d="M0 3h9l2 3h11v8L6 26H0z" fill="#c8c8c8" stroke={G} /><path d="M7 12h23l-6 14H1z" fill="url(#gray)" stroke={G} /></>],
  ['뷰 팔레트', <><path d="M1 1h26v26H1z" fill="#fff" stroke={G} strokeWidth="1.500" /><path d="M4 5h11v6H4zM18 5h6v6h-6zM7 14h6v5h3v5H4v-5h3z" fill="#f8c51c" stroke="#6a5208" /><path d="M17 17h10v10H17z" fill="#b8b8b8" stroke={G} /></>],
  ['표현', <Ball r={13} />],
  ['사용자 정의', listIcon],
];

function TaskPane() {
  return (
    <div className="absolute right-0 top-[42px] flex w-[40px] flex-col border-l-2 border-t-2 border-[#848484]">
      {paneItems.map(([label, icon]) => (
        <button key={label} aria-label={label} className="flex h-9 items-center justify-center border-b-2 border-[#848484] bg-[#d3d3d3]">
          <Svg>{icon}</Svg>
        </button>
      ))}
      <button aria-label="포럼" className="flex h-9 items-center justify-center border-b-2 border-[#848484] bg-[#f7f7f7]">
        <Svg className="size-[18px]"><path d="M1 3h17v13H9l-4 5v-5H1z" fill="#4a9cc5" stroke={B} strokeWidth="1.500" /><path d="M11 10h16v12h-2v5l-5-5h-9z" fill="#fff" stroke={G} strokeWidth="1.500" /></Svg>
      </button>
    </div>
  );
}

function Cube({ fill }: { fill: string }) {
  return (
    <Svg>
      <path d="M1 9h19v18H1zM9 1h18v18H9zM1 9l8-8M20 9l7-8M1 27l8-8M20 27l7-8" stroke="#2a2a2a" />
      <path d={fill} fill="url(#blue)" stroke={B} strokeWidth="1.300" />
    </Svg>
  );
}

const cubes: [string, string][] = [
  ['정면', 'M1 9h19v18H1z'],
  ['후면', 'M9 1h18v18H9z'],
  ['좌측면', 'M1 9l8-8v18l-8 8z'],
  ['우측면', 'M20 9l7-8v18l-7 8z'],
  ['윗면', 'M1 9l8-8h18l-7 8z'],
  ['아랫면', 'M1 27l8-8h18l-7 8z'],
];

function ViewsBar() {
  return (
    <div className="flex w-[45px] shrink-0 flex-col items-center border-l border-[#e4e4e4] bg-[#f7f7f7]">
      <div className="mt-[2px] w-9 border-t-2 border-dotted border-[#8a8a8a]" />
      <button aria-label="수직 보기" className="mb-1 mt-[14px]">
        <Svg className="block size-7"><path d="M0 20l13-5 14 5-13 8z" fill="url(#blue)" stroke={B} /><path d="M14 20V4" stroke="#222" strokeWidth="3" /><path d="M14-1l5 7H9z" fill="#222" /></Svg>
      </button>
      <div className="mb-[6px] w-9 border-t-2 border-[#848484]" />
      {cubes.map(([label, fill]) => (
        <button key={label} aria-label={label} className="flex h-[38px] items-center"><Cube fill={fill} /></button>
      ))}
      <button aria-label="등각 보기" className="flex h-[38px] w-[39px] items-center justify-center border-2 border-[#666] bg-[#b0b0b0]">
        <Svg><path d="M3 8 14 1l12 7v13l-12 7-11-7z" fill="url(#blue)" stroke={B} /><path d="M3 8l11 6 12-6-12-7z" fill="#8fd0ec" stroke={B} /><path d="M14 14v14" stroke={B} strokeWidth="1.400" /></Svg>
      </button>
      <button aria-label="트라이메트릭" className="flex h-[38px] items-center">
        <Svg><path d="M2 6 11 1l15 4v17l-9 6-15-6z" fill="url(#blue)" stroke={B} strokeWidth="1.400" /><path d="M2 6l15 5 9-6M17 11v17" stroke={B} strokeWidth="1.400" /></Svg>
      </button>
      <button aria-label="디메트릭" className="flex h-[38px] items-center">
        <Svg><path d="M3 8 9 1h18v20l-7 6H3z" fill="url(#blue)" stroke={B} strokeWidth="1.400" /><path d="M3 8l17 1 7-8M20 9v18" stroke={B} strokeWidth="1.400" /></Svg>
      </button>
      <div className="mb-[10px] mt-[2px] w-9 border-t-2 border-[#848484]" />
      <button aria-label="뷰 도구"><Svg className="block size-7">{scopeIcon}</Svg></button>
      <div className="mt-3 w-full border-t-2 border-[#848484]" />
    </div>
  );
}

function BottomTabs() {
  return (
    <div className="flex h-[26px] shrink-0 border-b-2 border-r-2 border-t-2 border-[#848484] bg-[#f7f7f7]">
      <div className="ml-[2px] flex">
        {['M6 3v10M16 3v10L8 8z', 'M14 3v10L6 8z', 'M6 3v10l8-5z', 'M14 3v10M4 3v10l8-5z'].map((d) => (
          <button key={d} aria-label="탭 이동" className="flex w-6 items-center justify-center border-b-2 border-r-2 border-[#8c8da6] bg-[#b5b6cc]">
            <svg viewBox="0 0 20 16" className="h-4 w-5" fill="#85869c" stroke="#85869c"><path d={d} /></svg>
          </button>
        ))}
      </div>
      <div role="tablist" className="flex text-[19px]">
        <button role="tab" aria-selected="true" className="flex w-[69px] items-center pl-5 leading-5">모델</button>
        <button role="tab" aria-selected="false" className="flex w-[69px] items-center justify-center whitespace-nowrap border-l-2 border-[#848484] bg-[#d3d3d3] text-[18px] leading-5">3D 뷰</button>
        <button role="tab" aria-selected="false" className="flex w-[148px] items-center border-l-2 border-r-2 border-[#848484] bg-[#d3d3d3] pl-[9px] leading-5">모션 스터디 1</button>
      </div>
    </div>
  );
}

function StatusBar() {
  return (
    <footer className="flex h-[27px] shrink-0 items-end bg-[#f7f7f7] leading-5 text-black">
      <span className="pl-px">SOLIDWORKS Education Edition - 강의 전용</span>
      <div className="ml-auto flex h-full items-end">
        <div className="h-6 w-2 self-center border-x border-[#cfcfcf]" />
        <span className="w-[116px] pl-1 text-[19px]">편집 중: 파트</span>
        <div className="h-6 w-[17px] self-center border-x border-[#cfcfcf]" />
        <button className="ml-[58px] flex items-center gap-[42px]">
          MMGS
          <svg viewBox="0 0 8 6" className="h-[5px] w-[7px]" fill="#333"><path d="M0 6h8L4 0z" /></svg>
        </button>
        <button aria-label="태그" className="ml-[74px] mr-1">
          <Svg className="block size-[26px]"><path d="M2 2l12-1 14 12v10l-8 4L2 11z" fill="#ddd" stroke="#555" strokeWidth="1.400" /><circle cx="7" cy="7" r="2.500" fill="#fff" stroke="#555" /><path d="M12 7l5 4M11 11l7 6M16 9l6 6" stroke="#444" strokeWidth="1.500" /></Svg>
        </button>
      </div>
    </footer>
  );
}

function Task({ label, children, open = false, active = false }: { label: string; children: ReactNode; open?: boolean; active?: boolean }) {
  return (
    <button aria-label={label} className={`relative flex h-full w-[75px] items-center justify-center ${active ? 'bg-[#4f606a]' : ''}`}>
      {children}
      {open && <span className="absolute inset-x-[5px] bottom-0 h-[3px] bg-[#76b9ed]" />}
    </button>
  );
}

function Taskbar() {
  return (
    <footer className="flex h-[60px] shrink-0 items-center bg-linear-to-r from-[#213740] from-50% to-[#1a2742] to-80% text-white">
      <button aria-label="시작" className="flex h-full w-[72px] items-center justify-center">
        <svg viewBox="0 0 24 24" className="size-6" fill="#fff"><path d="M0 3.500l10-1.500v9.500H0zM11 1.800 24 0v11.500H11zM0 12.500h10V22L0 20.500zM11 12.500h13V24l-13-1.800z" /></svg>
      </button>
      <label className="flex h-full w-[514px] items-center border-2 border-[#c0c0c0] bg-[#f2f2f2] pl-4">
        <svg viewBox="0 0 26 26" className="size-[26px]" fill="none" stroke="#222" strokeWidth="2"><circle cx="16" cy="9.500" r="8" /><path d="M10.500 15.500 1 25" /></svg>
        <input aria-label="검색" placeholder="검색하려면 여기에 입력하십시오." className="ml-[17px] min-w-0 flex-1 bg-transparent pt-[2px] text-[25px] outline-none placeholder:text-[#333]" />
      </label>
      <Task label="Cortana"><svg viewBox="0 0 26 26" className="size-[26px]" fill="none" stroke="#fff" strokeWidth="3"><circle cx="13" cy="13" r="10.500" /></svg></Task>
      <Task label="작업 보기">
        <svg viewBox="0 0 26 26" className="size-[26px]" fill="none" stroke="#fff" strokeWidth="1.800"><path d="M1 1v4h16V1M1 25v-4h16v4M1 8h16v10H1zM23 1v24" /><path d="M23 8v4" strokeWidth="4" /></svg>
      </Task>
      <Task label="Chrome" open>
        <svg viewBox="0 0 34 34" className="size-[34px]">
          <path d="M17 17 2.300 8.500A17 17 0 0 1 31.700 8.500z" fill="#e04a3a" /><path d="M17 17 2.300 8.500A17 17 0 0 0 17 34z" fill="#2c9f52" /><path d="M17 17h0L31.700 8.500A17 17 0 0 1 17 34z" fill="#f8cc45" />
          <path d="M17 9h15L24 17z" fill="#f8cc45" /><path d="M2.300 8.500 10 21l7-4z" fill="#2c9f52" /><path d="M2.300 8.500 17 9l-7 5z" fill="#e04a3a" />
          <circle cx="17" cy="17" r="8" fill="#fff" /><circle cx="17" cy="17" r="6.300" fill="#4a8af4" />
        </svg>
      </Task>
      <Task label="Edge" open>
        <svg viewBox="0 0 36 36" className="size-9">
          <path d="M0 18C0 6 9 0 19 0c11 0 17 8 17 15 0 6-4 9-9 9-4 0-6-1-4-4 3-6-2-10-8-9C7 12 2 17 0 18z" fill="#2fc1c9" /><path d="M22 1c9 1 14 8 14 14 0 6-4 9-9 9-3 0-5-1-4-3 8-3 7-15-1-20z" fill="#5fe066" />
          <path d="M0 18c1-6 8-8 14-7-4 3-6 8-3 14 3 7 12 8 21 3-4 6-9 8-14 8C7 36 0 28 0 18z" fill="#1e82d8" /><path d="M12 14c-4 8 2 19 20 14-4 6-9 8-14 8C9 34 5 22 12 14z" fill="#12509f" />
        </svg>
      </Task>
      <Task label="파일 탐색기" open>
        <svg viewBox="0 0 32 28" className="h-7 w-8"><path d="M0 1h12l3 3h17v23H0z" fill="#f9c83f" /><path d="M0 0h12l2 3-2 2H0z" fill="#dc9312" /><path d="M0 6h32v20H0z" fill="#fdd56a" /><path d="M5 28V18q0-3 3-3h16q3 0 3 3v10h-6v-7H11v7z" fill="#3a94dd" /></svg>
      </Task>
      <Task label="SOLIDWORKS" open active>
        <svg viewBox="0 0 36 36" className="size-9 overflow-visible"><path d="M1 6 17 0l17 6v20l-17 7L1 26z" fill="#b01116" stroke="#2a0506" /><path d="M1 6l16 5 17-5L17 0z" fill="#ec2027" /><path d="M17 11l17-5v20l-17 7z" fill="#5c090c" /><text x="4" y="24" fontSize="18" fontWeight="700" fontFamily="Open Sans" fill="#fff">S</text><text x="16" y="23" fontSize="16" fontWeight="700" fontFamily="Open Sans" fill="#fff">W</text><text x="12" y="34" fontSize="10" fontWeight="700" fontFamily="Open Sans" fill="#fff">2018</text></svg>
      </Task>
      <Task label="카카오톡" open>
        <svg viewBox="0 0 36 36" className="size-9"><rect width="36" height="36" rx="2" fill="#fae100" /><ellipse cx="18" cy="17" rx="14" ry="12" fill="#371d1e" /><path d="M9 25v7l8-5z" fill="#371d1e" /><text x="18" y="21" fontSize="9" fontWeight="700" textAnchor="middle" fontFamily="Open Sans" fill="#fae100">TALK</text></svg>
      </Task>
      <div className="ml-auto flex h-full items-center text-[20px]">
        <svg viewBox="0 0 30 30" className="size-[30px]"><circle cx="14" cy="15" r="14" fill="#ffb52e" /><circle cx="11" cy="12" r="9" fill="#ffd25e" /><path d="M14 25a4 4 0 0 1 0-8q2-5 7-4t5 5q5 1 4 5-1 2-3 2z" fill="#cfe8fb" /></svg>
        <span className="ml-3 whitespace-nowrap">33°C</span>
        <span className="ml-3 whitespace-nowrap text-[23px]">대체로 화창</span>
        <button aria-label="숨겨진 아이콘" className="ml-6"><svg viewBox="0 0 20 12" className="h-3 w-5" fill="none" stroke="#fff" strokeWidth="2"><path d="M1 11 10 2l9 9" /></svg></button>
        <svg viewBox="0 0 20 24" className="ml-[18px] h-6 w-5" fill="none" stroke="#fff" strokeWidth="1.600"><path d="M4 3q5-3 10 0M4 21q5 3 10 0M2 7h10v11H2zM12 12l5-4v9l-5-4z" /></svg>
        <svg viewBox="0 0 26 26" className="ml-[13px] size-[26px]" fill="none" stroke="#fff" strokeWidth="1.600"><path d="M1 4l24-3v23L1 22zM8 12q5-6 9 0M17 8v4h-4M8 17v-3" /><circle cx="20" cy="20" r="6" fill="#f90" stroke="none" /></svg>
        <svg viewBox="0 0 26 20" className="ml-[10px] h-5 w-[26px]" fill="none" stroke="#fff" strokeWidth="1.800"><path d="M8 5h16v13H5v-4M2 0v4M6 0v4M0 4h8v4q-4 4-8 0zM4 10v8" /><path d="M10 7h12v9H10z" fill="#fff" /></svg>
        <svg viewBox="0 0 22 22" className="ml-[13px] size-[22px]" fill="none" stroke="#fff" strokeWidth="1.600"><path d="M1 21Q2 3 20 1M6 21Q7 9 20 7M11 21q1-8 9-9" /><circle cx="18" cy="19" r="2.500" fill="#fff" stroke="none" /></svg>
        <svg viewBox="0 0 24 20" className="ml-3 h-5 w-6" fill="none" stroke="#fff" strokeWidth="1.600"><path d="M1 7h4l5-5v16l-5-5H1zM14 7l7 7M21 7l-7 7" /></svg>
        <button className="ml-[10px] text-[24px]">가</button>
        <div className="ml-[18px] flex w-[86px] flex-col items-center whitespace-nowrap pt-[2px] text-[19px] leading-7">
          <span>오후 12:39</span>
          <span className="text-[18px]">7/16/2021</span>
        </div>
        <button aria-label="알림" className="ml-[27px] mr-[19px]">
          <svg viewBox="0 0 36 38" className="h-[38px] w-9"><path d="M0 2h25v20H11l-5 5v-5H0z" fill="#fff" /><path d="M5 8h15M5 12h15M5 16h12" stroke="#1a2742" strokeWidth="1.600" /><circle cx="24" cy="25" r="11.500" fill="#2e3440" stroke="#888" /><text x="24" y="31" fontSize="16" fontWeight="700" textAnchor="middle" fontFamily="Open Sans" fill="#fff">3</text></svg>
        </button>
        <div className="mr-[6px] h-full w-px bg-[#7a8294]" />
      </div>
    </footer>
  );
}

export default function App() {
  return (
    <div className="flex h-screen flex-col overflow-hidden bg-[#f7f7f7] font-['Open_Sans','Noto_Sans_CJK_KR',sans-serif] text-[18px] text-[#111]">
      <Defs />
      <TitleBar />
      <Ribbon />
      <main className="flex min-h-0 flex-1">
        <div className="flex min-w-0 flex-1 flex-col">
          <div className="flex min-h-0 flex-1 flex-col bg-[linear-gradient(180deg,transparent_54%,#f4f6f9_63%,#ffffff_72%,#ffffff_86%,#f8f9fb_100%),radial-gradient(ellipse_65%_56%_at_18%_0%,#ffffff_45%,transparent_100%),radial-gradient(ellipse_22%_45%_at_100%_5%,#f2f3f7_0%,transparent_100%),linear-gradient(180deg,#e4e7f0_0%,#dadeea_40%,#e2e6ef_58%)]">
            <TabRow />
            <div className="flex min-h-0 flex-1">
              <FeaturePanel />
              <div className="relative min-w-0 flex-1">
                <Model />
                <Triad />
                <p className="absolute bottom-0 left-[11px] text-[21px] leading-5">*등각 보기</p>
                <button aria-label="패널 접기" className="absolute left-0 top-[597px] flex h-[59px] w-[12px] items-center border border-l-0 border-[#999] bg-[#f7f7f7]">
                  <span className="size-[9px] rounded-full border-2 border-[#a5a5a5]" />
                </button>
                <TaskPane />
              </div>
            </div>
          </div>
          <BottomTabs />
        </div>
        <ViewsBar />
      </main>
      <StatusBar />
      <Taskbar />
    </div>
  );
}
